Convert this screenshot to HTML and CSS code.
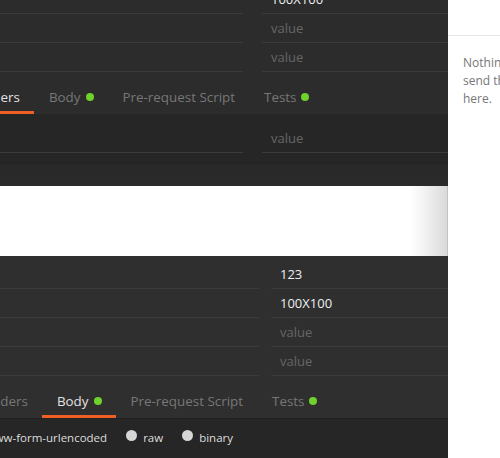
FILE: index.html
```html
<!DOCTYPE html>
<html>
<head>
<meta charset="utf-8">
<link rel="stylesheet" href="styles.css">
</head>
<body>
<div class="app">
  <div class="main">
    <section class="pane pane-top">
      <div class="kv kv-a kv-first">
        <div class="kv-row"><div class="kv-key"></div><div class="kv-val filled">100X100</div></div>
        <div class="kv-row"><div class="kv-key"></div><div class="kv-val">value</div></div>
        <div class="kv-row"><div class="kv-key"></div><div class="kv-val">value</div></div>
      </div>
      <nav class="tabs tabs-a">
        <span class="tab active">Headers</span>
        <span class="tab">Body<i class="dot"></i></span>
        <span class="tab">Pre-request Script</span>
        <span class="tab">Tests<i class="dot"></i></span>
      </nav>
      <div class="sub">
        <div class="kv kv-a">
          <div class="kv-row"><div class="kv-key"></div><div class="kv-val">value</div></div>
        </div>
      </div>
      <div class="sub-foot"></div>
    </section>

    <div class="gap"><div class="gap-shadow"></div></div>

    <section class="pane pane-bottom">
      <div class="kv kv-b">
        <div class="kv-row"><div class="kv-key"></div><div class="kv-val filled">123</div></div>
        <div class="kv-row"><div class="kv-key"></div><div class="kv-val filled">100X100</div></div>
        <div class="kv-row"><div class="kv-key"></div><div class="kv-val">value</div></div>
        <div class="kv-row"><div class="kv-key"></div><div class="kv-val">value</div></div>
      </div>
      <nav class="tabs tabs-b">
        <span class="tab">Headers</span>
        <span class="tab active">Body<i class="dot"></i></span>
        <span class="tab">Pre-request Script</span>
        <span class="tab">Tests<i class="dot"></i></span>
      </nav>
      <div class="body-modes">
        <label class="mode"><span class="radio"></span><span class="mode-label">x-www-form-urlencoded</span></label>
        <label class="mode"><span class="radio"></span><span class="mode-label">raw</span></label>
        <label class="mode"><span class="radio"></span><span class="mode-label">binary</span></label>
      </div>
    </section>
  </div>

  <aside class="resp">
    <div class="resp-head"></div>
    <p class="resp-empty">Nothing to see here. Hit<br>send the request to get a response<br>here.</p>
  </aside>
</div>
</body>
</html>
```

FILE: styles.css
```css
* { box-sizing: border-box; }

html, body {
  margin: 0;
  padding: 0;
  background: #ffffff;
}

body {
  width: 500px;
  height: 458px;
  overflow: hidden;
  font-family: "Open Sans", "Noto Sans", sans-serif;
}

.app {
  display: flex;
  height: 458px;
}

.main {
  width: 448px;
  flex: none;
  display: flex;
  flex-direction: column;
}

/* ---------- dark panes ---------- */
.pane {
  overflow: hidden;
  display: flex;
  flex-direction: column;
}

.pane-top {
  height: 186px;
  background: #2c2c2c;
}

.pane-bottom {
  height: 202px;
  background: #2f2f2f;
  padding-top: 4px;
}

/* key / value rows */
.kv { flex: none; }
.kv-first { margin-top: -15px; }

.kv-row {
  display: flex;
  height: 29px;
}

.kv-key,
.kv-val {
  height: 29px;
  border-bottom: 1px solid #3b3b3b;
  font-size: 13px;
  line-height: 28px;
  color: #666666;
  white-space: nowrap;
}

.kv-val { flex: 1; padding-left: 9px; }
.kv-val.filled { color: #eeeeee; }

.kv-a .kv-row { gap: 19px; }
.kv-a .kv-key { width: 243px; }

.kv-b .kv-row { gap: 12px; }
.kv-b .kv-key { width: 259px; }

/* tabs */
.tabs {
  flex: none;
  height: 42px;
  display: flex;
  align-items: flex-end;
}

.tabs-a { margin-left: -47px; }
.tabs-b { margin-left: -39px; }

.tab {
  display: flex;
  align-items: center;
  padding: 0 14.5px 5px;
  line-height: 18px;
  font-size: 13.4px;
  color: #777777;
  white-space: nowrap;
  border-bottom: 3px solid transparent;
}

.tab.active {
  color: #e2e2e2;
  border-bottom-color: #ef5f24;
}

.dot {
  width: 8px;
  height: 8px;
  border-radius: 50%;
  background: #6fd12b;
  margin-left: 5px;
}

/* lower part of top pane */
.sub {
  flex: none;
  background: #262626;
  padding: 10px 0;
}

.sub-foot {
  flex: 1;
  background: linear-gradient(#282828, #2b2b2b);
  border-top: 1px solid #232323;
}

/* body modes radio row */
.body-modes {
  flex: 1;
  display: flex;
  align-items: center;
  gap: 19px;
  padding-bottom: 3px;
  background: #262626;
  border-top: 1px solid #202020;
  margin-left: -41px;
}

.mode {
  display: flex;
  align-items: center;
  gap: 6px;
  font-size: 11.5px;
  color: #dddddd;
  white-space: nowrap;
}

.radio {
  width: 11px;
  height: 11px;
  border-radius: 50%;
  background: #d6d6d6;
  margin-top: -3px;
}

/* white gap with shadow */
.gap {
  height: 70px;
  flex: none;
  background: #ffffff;
  display: flex;
  justify-content: flex-end;
}

.gap-shadow {
  width: 38px;
  background: linear-gradient(to right, #ffffff, #f2f2f2 40%, #dadada);
  border-right: 1px solid #c2c2c2;
}

/* response sidebar */
.resp {
  flex: 1;
  background: #ffffff;
  overflow: hidden;
}

.resp-head {
  height: 36px;
  border-bottom: 1px solid #e6e6e6;
}

.resp-empty {
  margin: 0;
  padding: 18px 0 0 15px;
  font-size: 12px;
  line-height: 18px;
  color: #777777;
  white-space: nowrap;
}
```
